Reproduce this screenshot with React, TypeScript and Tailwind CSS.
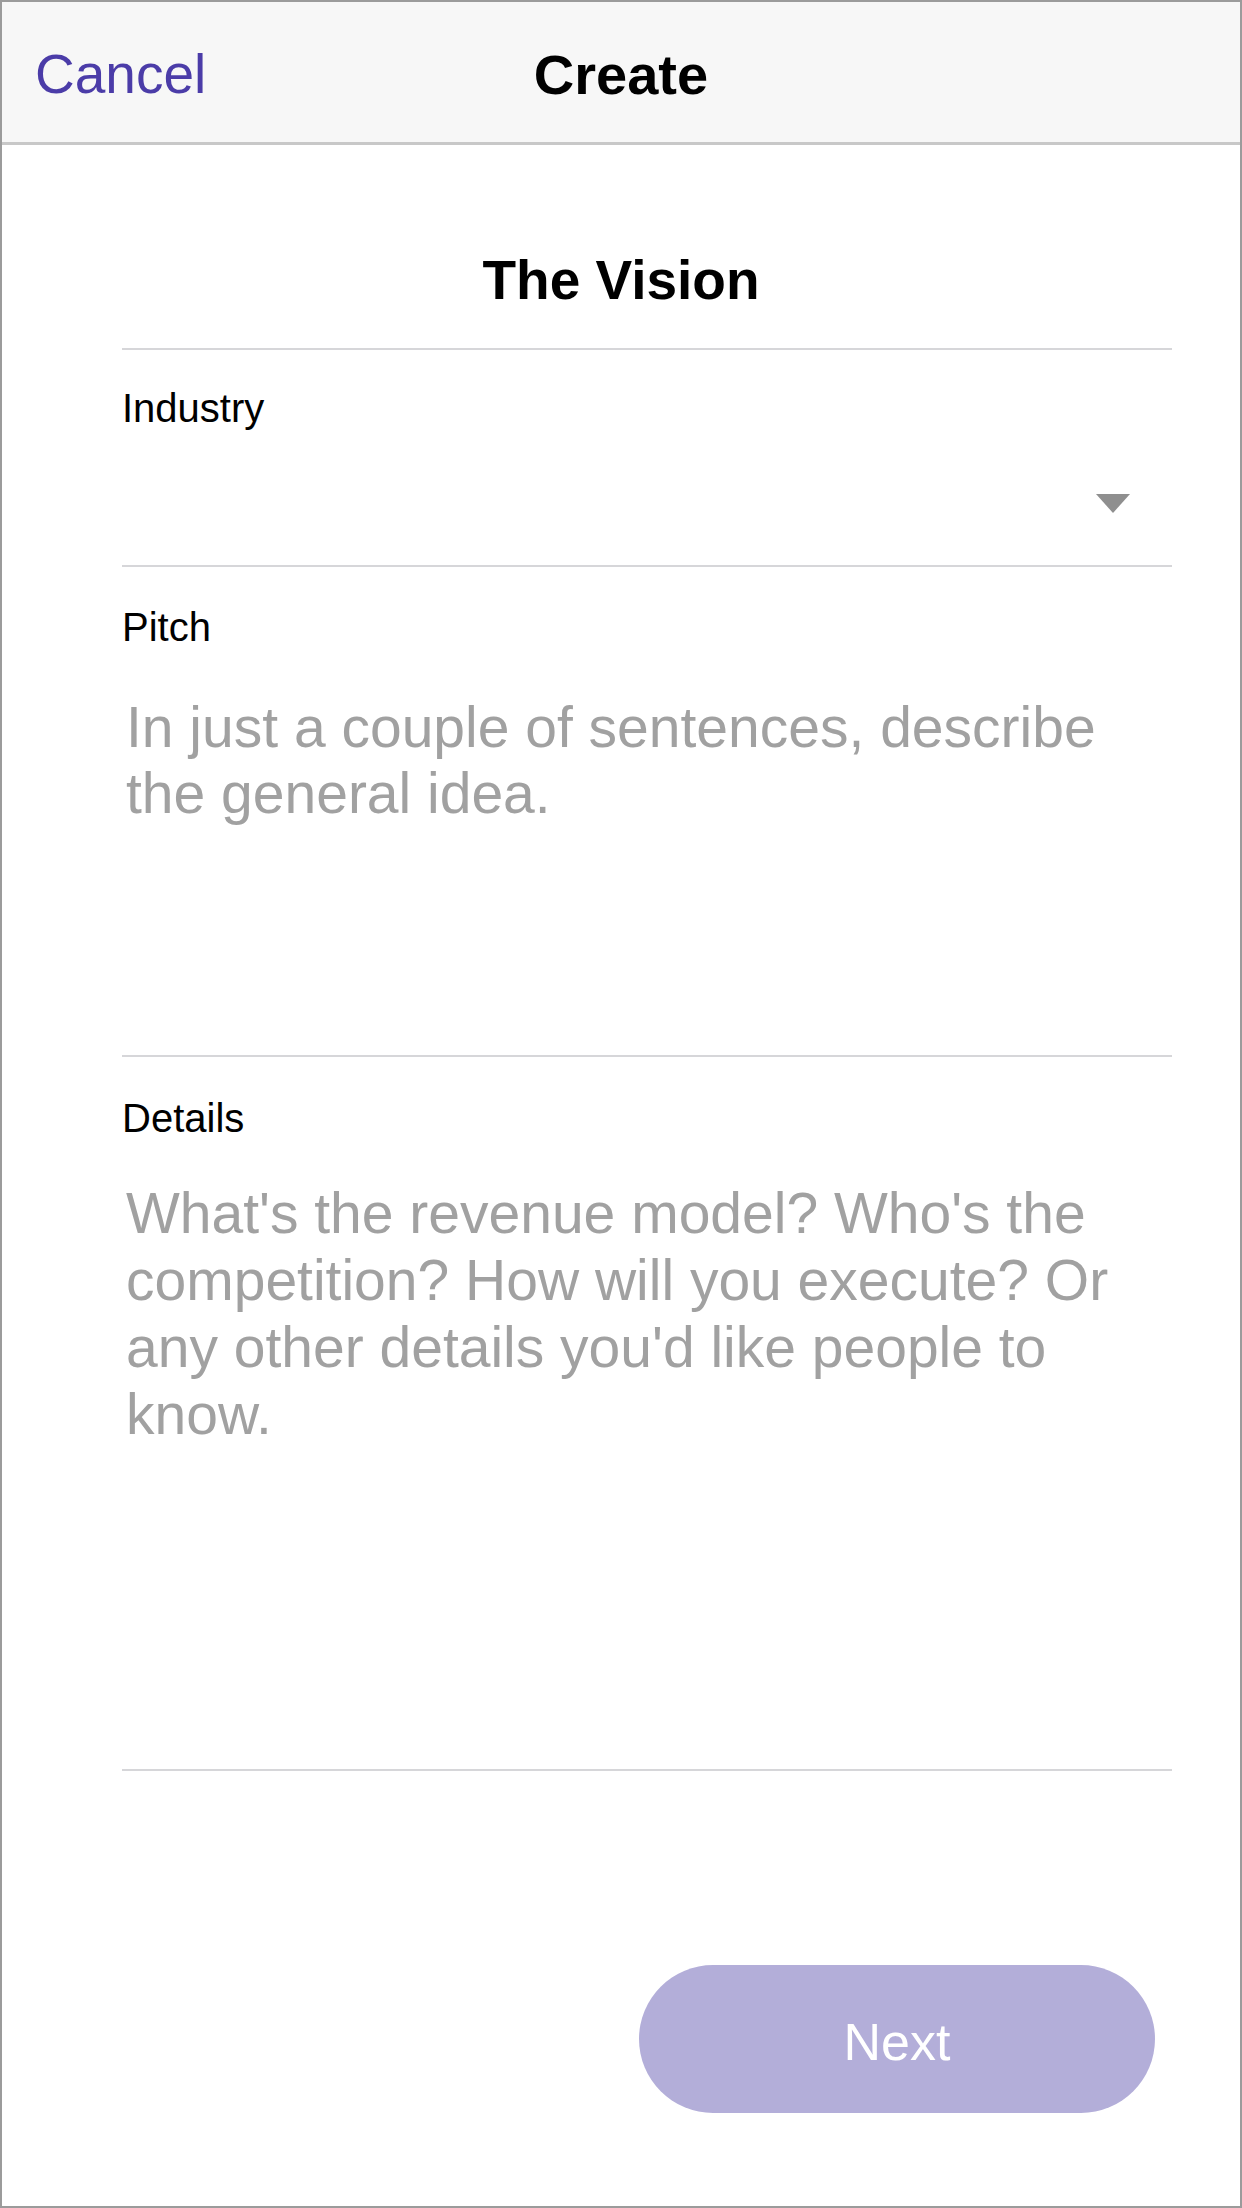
import React from "react";

const Divider = () => <div className="h-[2px] w-full shrink-0 bg-[#d6d6d9]" />;

const Label = ({ children, className = "" }: { children: React.ReactNode; className?: string }) => (
  <label className={`block text-[40px] leading-none text-black ${className}`}>{children}</label>
);

export default function App() {
  return (
    <div className="w-[1242px] h-[2208px] border-2 border-[#9b9b9b] bg-white flex flex-col font-['Liberation_Sans',Arial,sans-serif] text-black">
      {/* nav bar */}
      <header className="h-[143px] shrink-0 bg-[#f7f7f7] border-b-[3px] border-[#c8c8c8] grid grid-cols-[1fr_auto_1fr] items-start">
        <button className="justify-self-start ml-[33px] mt-[45px] text-[55px] leading-none text-[#4b3ca8]">
          Cancel
        </button>
        <h1 className="mt-[45px] text-[56px] font-bold leading-none">Create</h1>
        <div />
      </header>

      <main className="flex-1 flex flex-col">
        <h2 className="mt-[108px] text-center text-[55px] font-bold leading-none">The Vision</h2>

        <div className="flex-1 flex flex-col ml-[120px] mr-[68px]">
          <div className="mt-[40px]">
            <Divider />
          </div>

          {/* industry */}
          <Label className="mt-[38px]">Industry</Label>
          <div className="flex justify-end pr-[42px] pt-[66px] pb-[52px]">
            <svg width="34" height="19" viewBox="0 0 34 19">
              <polygon points="0,0 34,0 17,19" fill="#8f8f8f" />
            </svg>
          </div>
          <Divider />

          {/* pitch */}
          <Label className="mt-[40px]">Pitch</Label>
          <textarea
            className="mt-[47px] h-[361px] w-[1014px] resize-none p-0 pl-[4px] text-[57px] leading-[66px] outline-none placeholder:text-[#a1a1a1]"
            placeholder="In just a couple of sentences, describe the general idea."
          />
          <Divider />

          {/* details */}
          <Label className="mt-[41px]">Details</Label>
          <textarea
            className="mt-[42px] h-[589px] w-[1014px] resize-none p-0 pl-[4px] text-[57px] leading-[67px] outline-none placeholder:text-[#a1a1a1]"
            placeholder="What's the revenue model? Who's the competition? How will you execute? Or any other details you'd like people to know."
          />
          <Divider />

          <button className="self-end mr-[17px] mt-[194px] h-[148px] w-[516px] rounded-full bg-[#b3aed9] pt-[6px] text-[52px] leading-none text-white">
            Next
          </button>
        </div>
      </main>
    </div>
  );
}
